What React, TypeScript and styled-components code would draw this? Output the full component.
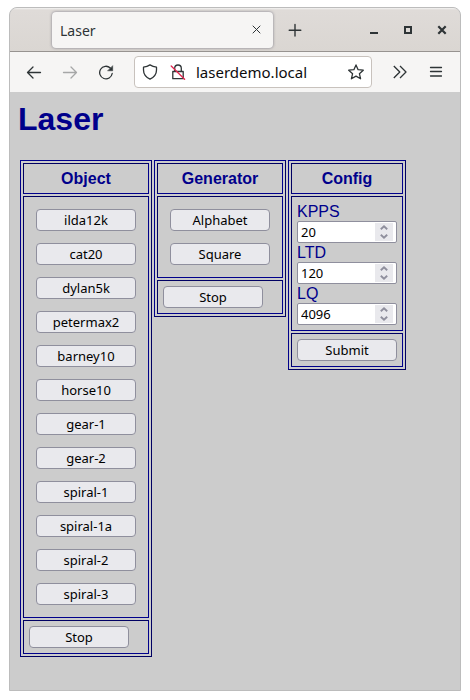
import React, { useRef, useState } from "react";
import styled, { createGlobalStyle, css } from "styled-components";

const ui = '"Noto Sans", "Open Sans", sans-serif';
const navy = "#00008b";
const deepNavy = "#000062";

const GlobalStyle = createGlobalStyle`
  *, *::before, *::after { box-sizing: border-box; }
  body { margin: 0; background: #fff; }
  button, input { font: inherit; }
`;

const Window = styled.div`
  display: flex;
  flex-direction: column;
  min-height: calc(100vh - 16px);
  margin: 7px 9px 9px;
  border: 1px solid #bcbcbc;
  border-radius: 8px 8px 0 0;
  background: #ccc;
  overflow: hidden;
  font-family: ${ui};
`;

const TabStrip = styled.header`
  display: flex;
  align-items: center;
  height: 44px;
  padding: 0 1px 0 42px;
  border-bottom: 1px solid #979390;
  background: linear-gradient(#f4f3f2, #dfdbd8 2px, #dad6d2);
`;

const Tab = styled.div`
  display: flex;
  align-items: center;
  flex: 0 1 221px;
  min-width: 0;
  height: 36px;
  padding: 0 4px 0 8px;
  border-radius: 4px;
  background: #f6f5f4;
  box-shadow: 0 0 3px rgba(60, 60, 80, 0.6);
  color: #2e3436;
  font-size: 14px;
  line-height: 20px;
`;

const TabTitle = styled.span`
  flex: 1;
  padding-top: 2px;
`;

const IconButton = styled.button<{ $width: number; $dim?: boolean }>`
  display: flex;
  align-items: center;
  justify-content: center;
  flex: none;
  width: ${(p) => p.$width}px;
  height: 24px;
  padding: 0;
  border: 0;
  background: none;
  color: ${(p) => (p.$dim ? "#a6a7a7" : "#2e3436")};
`;

const NewTab = styled(IconButton)`
  margin-left: 8px;
`;

const WindowControls = styled.div`
  display: flex;
  margin-left: auto;
`;

const Toolbar = styled.nav`
  display: flex;
  align-items: center;
  height: 40px;
  padding: 0 6px;
  background: #f6f5f4;
`;

const AddressBar = styled.div`
  display: flex;
  align-items: center;
  flex: 1;
  min-width: 0;
  height: 32px;
  margin: 0 10px;
  padding: 0 1px;
  border: 1px solid #c8c2bd;
  border-radius: 4px;
  background: #fff;
`;

const AddressInput = styled.input`
  flex: 1;
  width: 0;
  min-width: 0;
  padding: 0 0 0 4px;
  border: 0;
  outline: 0;
  background: none;
  color: #0c0c0d;
  font-size: 15px;
  line-height: 20px;
`;

const Page = styled.main`
  flex: 1;
  padding: 8px;
  color: ${navy};
  font-family: "Liberation Sans", Arial, sans-serif;
  font-size: 16px;
  line-height: 19px;
`;

const Heading = styled.h1`
  margin: 0;
  font-size: 32px;
  line-height: 38px;
`;

const Panels = styled.div`
  display: flex;
  flex-wrap: wrap;
  align-items: flex-start;
  gap: 2px;
  margin: 22px 2px 2px;
`;

const Panel = styled.table`
  border: 1px solid;
  border-color: ${navy} ${deepNavy} ${deepNavy} ${navy};
  border-spacing: 2px;
`;

const cell = css`
  padding: 5px;
  border: 1px solid;
  border-color: ${deepNavy} ${navy} ${navy} ${deepNavy};
`;

const HeadCell = styled.th`
  ${cell}
`;

const Cell = styled.td<{ $roomy?: boolean }>`
  ${cell}
  ${(p) => p.$roomy && "padding: 12px;"}
`;

const ButtonStack = styled.div`
  display: flex;
  flex-direction: column;
  gap: 12px;
`;

const PushButton = styled.button`
  display: block;
  width: 100px;
  height: 22px;
  padding: 0;
  border: 1px solid #8f8f9d;
  border-radius: 4px;
  background: #e9e9ed;
  color: #000;
  font-family: ${ui};
  font-size: 13px;
  line-height: 18px;
`;

const FieldLabel = styled.label`
  display: block;
`;

const NumberBox = styled.div`
  display: flex;
  width: 100px;
  height: 22px;
  padding: 1px 3px;
  border: 1px solid #8f8f9d;
  border-radius: 2px;
  background: #fff;
`;

const NumberInput = styled.input`
  flex: 1;
  width: 0;
  min-width: 0;
  padding: 0;
  border: 0;
  outline: 0;
  background: none;
  color: #000;
  font-family: ${ui};
  font-size: 13px;
  line-height: 18px;
  appearance: textfield;
  &::-webkit-inner-spin-button { display: none; }
`;

const Spinner = styled.div`
  display: flex;
  flex-direction: column;
  width: 18px;
  background: #e9e9ed;
`;

const SpinButton = styled.button`
  display: flex;
  align-items: center;
  justify-content: center;
  height: 9px;
  padding: 0;
  border: 0;
  background: none;
  color: #8f8f9d;
`;

function Glyph({ width = 1.3, children }: { width?: number; children: React.ReactNode }) {
  return (
    <svg width="16" height="16" viewBox="0 0 16 16" fill="none" stroke="currentColor"
      strokeWidth={width} strokeLinecap="round" strokeLinejoin="round" aria-hidden="true">
      {children}
    </svg>
  );
}

function Chevron({ path }: { path: string }) {
  return (
    <svg width="8" height="5" viewBox="0 0 8 5" fill="none" stroke="currentColor" strokeWidth="1.9" aria-hidden="true">
      <path d={path} />
    </svg>
  );
}

function NumberField({ id, label, initial }: { id: string; label: string; initial: number }) {
  const [value, setValue] = useState(String(initial));
  const input = useRef<HTMLInputElement>(null);
  const step = (by: number) => {
    setValue(String(Number(value) + by));
    input.current?.focus();
  };
  return (
    <>
      <FieldLabel htmlFor={id}>{label}</FieldLabel>
      <NumberBox>
        <NumberInput ref={input} id={id} type="number" value={value} onChange={(e) => setValue(e.target.value)} />
        <Spinner>
          <SpinButton type="button" aria-label={`Increase ${label}`} onClick={() => step(1)}>
            <Chevron path="M.8 4.2 4 1.300l3.200 2.900" />
          </SpinButton>
          <SpinButton type="button" aria-label={`Decrease ${label}`} onClick={() => step(-1)}>
            <Chevron path="M.8.8 4 3.700 7.200.8" />
          </SpinButton>
        </Spinner>
      </NumberBox>
    </>
  );
}

function ButtonPanel({ title, items }: { title: string; items: string[] }) {
  return (
    <Panel>
      <thead><tr><HeadCell scope="col">{title}</HeadCell></tr></thead>
      <tbody>
        <tr>
          <Cell $roomy>
            <ButtonStack>
              {items.map((item) => <PushButton key={item} type="button">{item}</PushButton>)}
            </ButtonStack>
          </Cell>
        </tr>
        <tr><Cell><PushButton type="button">Stop</PushButton></Cell></tr>
      </tbody>
    </Panel>
  );
}

const objects = [
  "ilda12k", "cat20", "dylan5k", "petermax2", "barney10", "horse10",
  "gear-1", "gear-2", "spiral-1", "spiral-1a", "spiral-2", "spiral-3",
];

export default function App() {
  return (
    <>
      <GlobalStyle />
      <Window>
        <TabStrip>
          <Tab>
            <TabTitle>Laser</TabTitle>
            <IconButton $width={24} aria-label="Close tab">
              <Glyph width={1}><path d="m4 4 7 7m0-7-7 7" /></Glyph>
            </IconButton>
          </Tab>
          <NewTab $width={28} aria-label="New tab">
            <Glyph width={1.4}><path d="M8 2.500v11.500M2.200 8.300h11.600" /></Glyph>
          </NewTab>
          <WindowControls>
            <IconButton $width={34} aria-label="Minimize">
              <Glyph width={2}><path d="M4 11h8" strokeLinecap="butt" /></Glyph>
            </IconButton>
            <IconButton $width={34} aria-label="Maximize">
              <Glyph width={2}><path d="M5 5h6v6H5z" strokeLinejoin="miter" /></Glyph>
            </IconButton>
            <IconButton $width={34} aria-label="Close window">
              <Glyph width={2.2}><path d="m4.300 4.300 7.400 7.400m0-7.400-7.400 7.400" strokeLinecap="butt" /></Glyph>
            </IconButton>
          </WindowControls>
        </TabStrip>
        <Toolbar>
          <IconButton $width={36} aria-label="Back">
            <Glyph><path d="M14.500 8.500h-13M7 3 1.500 8.500 7 14" /></Glyph>
          </IconButton>
          <IconButton $width={36} $dim aria-label="Forward">
            <Glyph><path d="M1.500 8.500h13M9 3l5.500 5.500L9 14" /></Glyph>
          </IconButton>
          <IconButton $width={36} aria-label="Reload">
            <Glyph>
              <path d="M14.200 9.500A6.300 6.300 0 1 1 12.300 4" />
              <path d="M14.700 2v4.800H9.900z" fill="currentColor" strokeWidth="0.5" />
            </Glyph>
          </IconButton>
          <AddressBar>
            <IconButton $width={28} aria-label="Tracking protection">
              <Glyph><path d="M8 .9c2 1.300 4.100 2 6.500 2.300v2.900c0 4.100-2.200 7.100-6.500 9.100-4.300-2-6.500-5-6.500-9.100V3.200C3.900 2.900 6 2.200 8 .9z" /></Glyph>
            </IconButton>
            <IconButton $width={28} aria-label="Connection is not secure">
              <Glyph>
                <path d="M4.700 7.500V4.300a3.300 3.300 0 0 1 6.600 0v3.200M2.800 7.500h10.400v7.200H2.800z" />
                <path d="m1.200 2 13.400 13.300" stroke="#e22850" />
              </Glyph>
            </IconButton>
            <AddressInput aria-label="Address" defaultValue="laserdemo.local" spellCheck={false} />
            <IconButton $width={28} aria-label="Bookmark this page">
              <Glyph><path d="m8 .9 2.100 4.800 5.200.5-3.900 3.500 1.200 5.100L8 12.100l-4.600 2.700 1.200-5.100L.7 6.200l5.200-.5z" /></Glyph>
            </IconButton>
          </AddressBar>
          <IconButton $width={36} aria-label="More tools">
            <Glyph><path d="m1.800 2 6 6-6 6M8 2l6 6-6 6" strokeLinecap="butt" /></Glyph>
          </IconButton>
          <IconButton $width={36} aria-label="Open menu">
            <Glyph><path d="M2.500 3.500h11M2.500 7.500h11M2.500 12h11" /></Glyph>
          </IconButton>
        </Toolbar>
        <Page>
          <Heading>Laser</Heading>
          <Panels>
            <ButtonPanel title="Object" items={objects} />
            <ButtonPanel title="Generator" items={["Alphabet", "Square"]} />
            <Panel>
              <thead><tr><HeadCell scope="col">Config</HeadCell></tr></thead>
              <tbody>
                <tr>
                  <Cell>
                    <NumberField id="kpps" label="KPPS" initial={20} />
                    <NumberField id="ltd" label="LTD" initial={120} />
                    <NumberField id="lq" label="LQ" initial={4096} />
                  </Cell>
                </tr>
                <tr><Cell><PushButton type="submit">Submit</PushButton></Cell></tr>
              </tbody>
            </Panel>
          </Panels>
        </Page>
      </Window>
    </>
  );
}
